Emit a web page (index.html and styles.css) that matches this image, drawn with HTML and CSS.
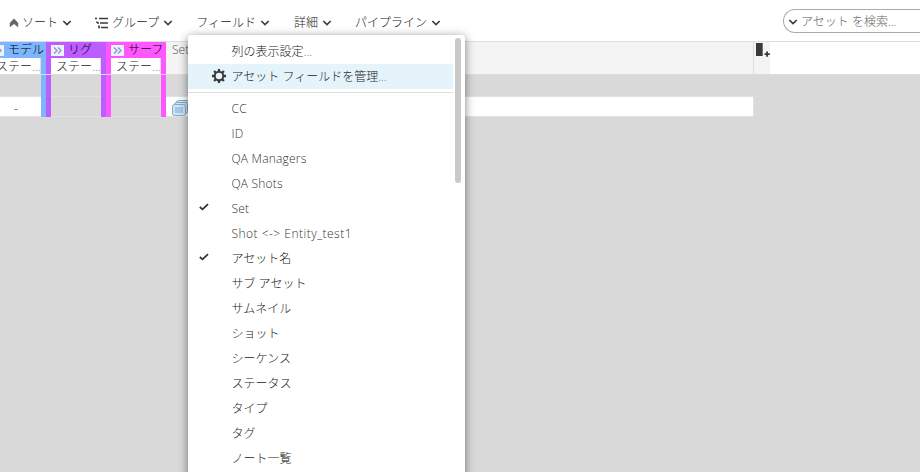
FILE: index.html
```
<!DOCTYPE html>
<html lang="ja">
<head>
<meta charset="utf-8">
<title>アセット</title>
<link rel="stylesheet" href="styles.css">
</head>
<body>
<svg class="defs" width="0" height="0">
  <symbol id="chev" viewBox="0 0 10 8"><path d="M1.3 2 5 5.600 8.700 2" fill="none" stroke="#3c3c3c" stroke-width="1.700"/></symbol>
  <symbol id="expand" viewBox="0 0 13 11"><rect width="13" height="11" fill="#eef2fb"/><path d="M3 2.5 6 5.5 3 8.5M7 2.5 10 5.5 7 8.5" fill="none" stroke="#8797c8" stroke-width="1.3"/></symbol>
  <symbol id="check" viewBox="0 0 10 8"><path d="M.8 4 3.5 6.4 9 1.2" fill="none" stroke="#333" stroke-width="1.8"/></symbol>
</svg>
<div class="app">
  <header class="toolbar">
    <button class="tool sort"><svg width="10" height="10" viewBox="0 0 10 10"><path d="M5 .5 9.2 5V9.2L5 6 .8 9.2V5Z" fill="#666"/></svg><span>ソート</span><svg class="chev"><use href="#chev"/></svg></button>
    <button class="tool group"><svg width="13" height="12" viewBox="0 0 13 12"><path d="M0 1.500H2M4 1.500H13M5 6H13M6 10.500H13M2 4.500V6M2 6H4M4 8.500V10.500H5" fill="none" stroke="#3c3c3c" stroke-width="1.600"/></svg><span>グループ</span><svg class="chev"><use href="#chev"/></svg></button>
    <button class="tool field"><span>フィールド</span><svg class="chev"><use href="#chev"/></svg></button>
    <button class="tool detail"><span>詳細</span><svg class="chev"><use href="#chev"/></svg></button>
    <button class="tool pipeline"><span>パイプライン</span><svg class="chev"><use href="#chev"/></svg></button>
    <div class="search"><svg class="chev"><use href="#chev"/></svg><span>アセット を検索...</span></div>
  </header>
  <main class="table">
    <section class="step model">
      <h2><svg class="expand"><use href="#expand"/></svg><span>モデル</span></h2>
      <div class="sub">ステー<i>...</i></div><div class="blank"></div><div class="cell filled">-</div>
    </section>
    <section class="step rig">
      <h2><svg class="expand"><use href="#expand"/></svg><span>リグ</span></h2>
      <div class="sub">ステー<i>...</i></div><div class="blank"></div><div class="cell"></div>
    </section>
    <section class="step surf">
      <h2><svg class="expand"><use href="#expand"/></svg><span>サーフ</span></h2>
      <div class="sub">ステー<i>...</i></div><div class="blank"></div><div class="cell"></div>
    </section>
    <section class="set">
      <div class="head">Set</div><div class="blank"></div>
      <div class="cell"><svg width="18" height="17" viewBox="0 0 18 17"><g fill="#d3e4f4" stroke="#82abd2"><rect x="4.500" y=".5" width="13" height="11" rx="2"/><rect x="2.500" y="2.500" width="13" height="11" rx="2"/><rect x=".5" y="4.500" width="13" height="11" rx="2"/></g><rect x="3" y="7" width="8" height="6" fill="#a5c8e8"/></svg></div>
    </section>
    <section class="add"><svg width="16" height="16" viewBox="0 0 16 16"><path d="M2 1H8.700V14H2ZM10.500 11.200H12.200V9.500H14V11.200H15.800V13H14V14.800H12.200V13H10.500Z" fill="#393939"/></svg></section>
    <section class="rest"></section>
  </main>
  <nav class="menu">
    <ul>
      <li>列の表示設定<i>...</i></li>
      <li class="active"><svg class="gear" width="14" height="14" viewBox="0 0 14 14"><circle cx="7" cy="7" r="4.300" fill="none" stroke="#393939" stroke-width="2"/><path d="M7 0V2.500M7 11.500V14M0 7H2.500M11.500 7H14M2.050 2.050 3.800 3.800M10.200 10.200 11.950 11.950M2.050 11.950 3.800 10.200M10.200 3.800 11.950 2.050" stroke="#393939" stroke-width="2.300"/></svg>アセット フィールドを管理<i>...</i></li>
      <li class="divider"></li>
      <li class="latin"><span>CC</span></li>
      <li class="latin"><span>ID</span></li>
      <li class="latin"><span>QA Managers</span></li>
      <li class="latin"><span>QA Shots</span></li>
      <li class="latin"><svg class="check"><use href="#check"/></svg><span>Set</span></li>
      <li class="latin wide"><span>Shot &lt;-&gt; Entity_test1</span></li>
      <li><svg class="check"><use href="#check"/></svg>アセット名</li>
      <li>サブ アセット</li>
      <li>サムネイル</li>
      <li>ショット</li>
      <li>シーケンス</li>
      <li>ステータス</li>
      <li>タイプ</li>
      <li>タグ</li>
      <li>ノート一覧</li>
    </ul>
    <div class="thumb"></div>
  </nav>
</div>
</body>
</html>
```
FILE: styles.css
```
* { box-sizing: border-box; }
body { margin: 0; background: #d9d9d9; font: 300 12px/16px "Open Sans", "Noto Sans CJK JP", sans-serif; color: #222; }
.defs { position: absolute; }
.app { width: 920px; height: 472px; overflow: hidden; position: relative; }
svg { flex: none; display: block; }
i { font-style: normal; color: #777; }

.toolbar { height: 42px; background: #fff; border-bottom: 1px solid #ddd; display: flex; align-items: center; padding: 4px 0 0 9px; }
.tool { display: flex; align-items: center; border: 0; padding: 1px 0 0; background: none; font: inherit; color: inherit; white-space: nowrap; }
.chev { width: 10px; height: 8px; margin-left: 4px; }
.sort > span { margin-left: 3px; }
.group { margin-left: 23px; }
.group > span { margin-left: 4px; }
.field { margin-left: 23px; }
.detail { margin-left: 24px; }
.pipeline { margin-left: 23px; }
.search { margin-left: auto; width: 137px; height: 24px; border: 1px solid #aaa; border-right: 0; border-radius: 12px 0 0 12px; display: flex; align-items: center; color: #666; margin-bottom: 3px; padding: 2px 0 0; white-space: nowrap; }
.search span { margin-left: 3px; }

.table { display: grid; grid-template-columns: 46px 60px 60px 588px 16px 150px; }
.step { height: 75px; border: solid var(--c); border-width: 0 5px; min-width: 0; }
.model { --c: #7db5ff; border-left: 0; }
.rig { --c: #bd5cff; }
.surf { --c: #ff57ff; }
.step h2 { margin: 0; height: 16px; background: var(--c); display: flex; font: inherit; color: #000; white-space: nowrap; }
.step h2 span { margin-left: 4px; }
.expand { width: 13px; height: 11px; margin-top: 3px; }
.model .expand { margin-left: -9px; }
.sub { height: 17px; background: #fff; border-right: 1px solid #ddd; padding-left: 5px; white-space: nowrap; line-height: 17px; overflow: hidden; }
.model .sub { padding: 0; text-indent: -4px; }
.blank { position: relative; height: 22px; border-bottom: 1px solid #e1e1e1; }
.step .blank::before { content: ""; position: absolute; left: -5px; right: -5px; top: -1px; height: 1px; background: #ddd; }
.step .cell { height: 20px; border-bottom: 1px solid #e1e1e1; text-align: center; line-height: 24px; padding-right: 9px; }
.filled { background: #fff; }
.set .head { height: 33px; background: #f4f4f4; border-right: 1px solid #ddd; border-bottom: 1px solid #ddd; padding-left: 6px; color: #555; }
.set .cell { height: 20px; background: #fff; border: solid #e1e1e1; border-width: 0 1px 1px 0; padding: 3px 0 0 6px; }
.add { height: 33px; background: #f4f4f4; border-bottom: 1px solid #ddd; }
.rest { height: 33px; background: #fff; border-bottom: 1px solid #ddd; }

.menu { position: absolute; left: 188px; top: 35px; width: 277px; height: 450px; background: #fff; border-radius: 3px; box-shadow: 0 2px 10px rgba(0,0,0,.5); }
.menu ul { list-style: none; margin: 0; padding: 4px 0 0; width: 265px; }
.menu li { position: relative; height: 25px; line-height: 26px; padding-left: 43.500px; white-space: nowrap; }
.menu .active { background: #e5f3fb; }
.menu .divider { height: 4px; border-bottom: 1px solid #ddd; margin-bottom: 3px; }
.menu .latin { color: #333; line-height: 25px; letter-spacing: .2px; }
.menu .wide { letter-spacing: .48px; }
.gear { position: absolute; left: 24px; top: 5px; }
.check { position: absolute; left: 11px; top: 7px; width: 10px; height: 8px; }
.thumb { position: absolute; left: 267px; top: 3px; width: 6px; height: 145px; border-radius: 3px; background: #c9c9c9; }
```
